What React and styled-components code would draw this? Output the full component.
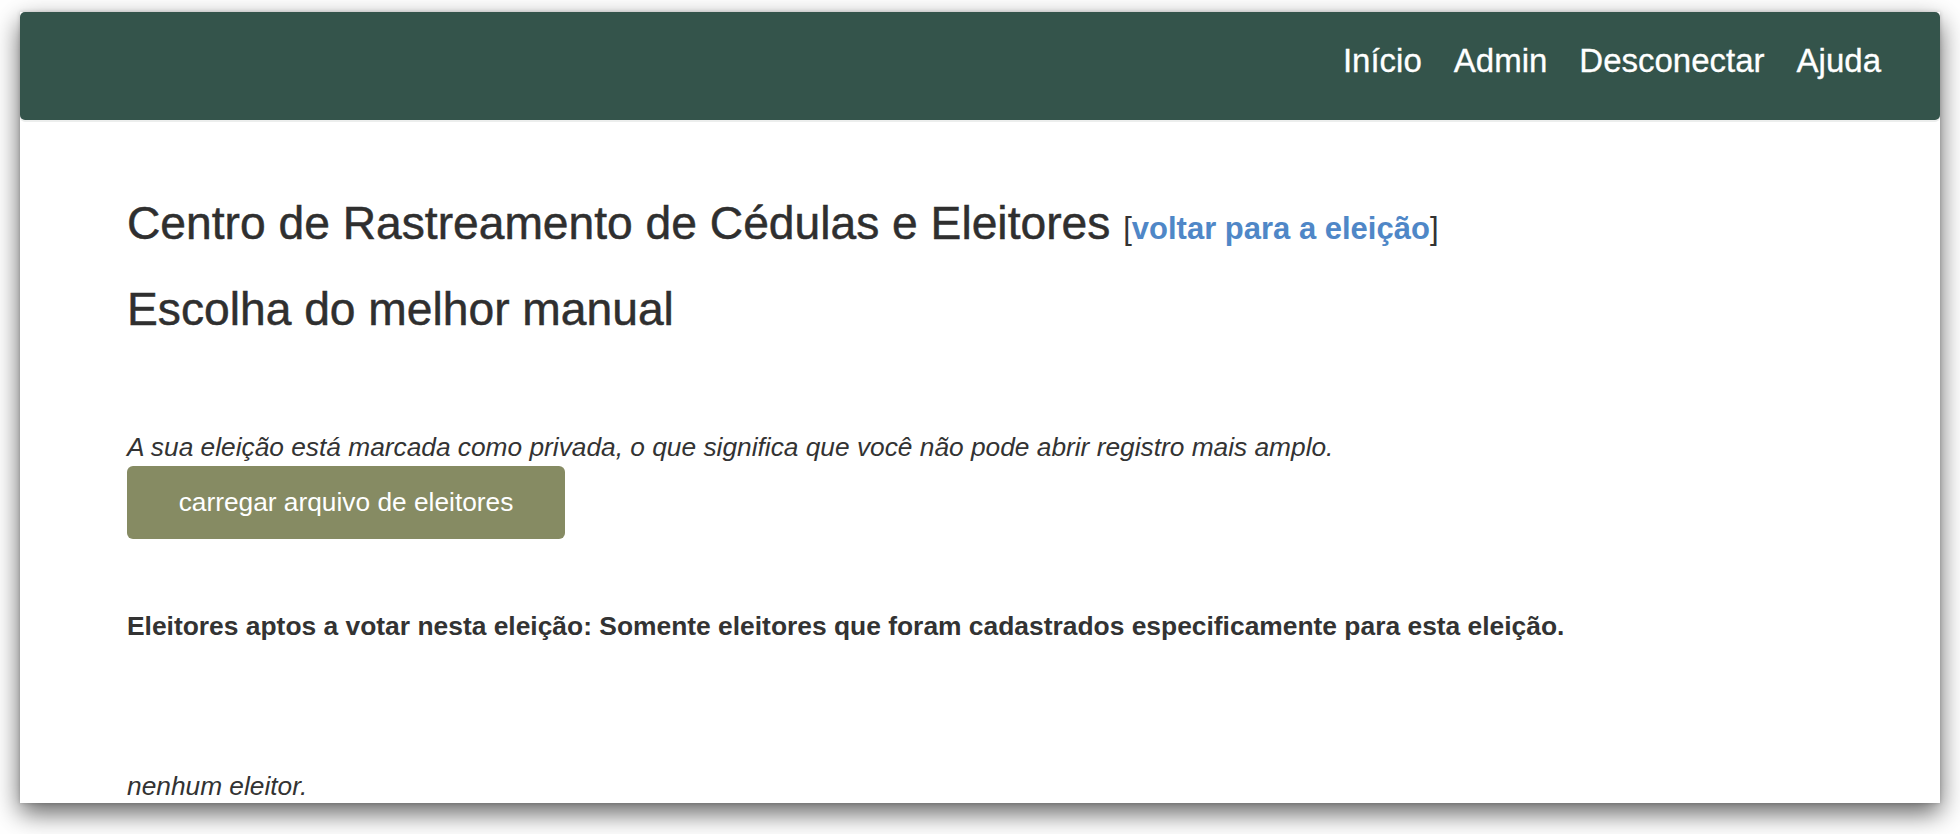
import React from "react";
import styled, { createGlobalStyle } from "styled-components";

const Global = createGlobalStyle`
  html, body {
    margin: 0;
    padding: 0;
    background: #ffffff;
  }
  body {
    font-family: "Liberation Sans", Arial, Helvetica, sans-serif;
    color: #333333;
    overflow: hidden;
  }
`;

const Frame = styled.div`
  width: 1960px;
  height: 834px;
  padding: 12px 0 0 20px;
  box-sizing: border-box;
  overflow: hidden;
`;

const Window = styled.div`
  width: 1920px;
  height: 791px;
  background: #ffffff;
  overflow: hidden;
  box-shadow: 0 10px 24px rgba(0, 0, 0, 0.62), 0 0 4px rgba(0, 0, 0, 0.18);
`;

const Navbar = styled.nav`
  height: 108px;
  background: #34544b;
  border-radius: 5px;
  display: flex;
  justify-content: flex-end;
  align-items: flex-start;
  padding-right: 43px;
  box-shadow: 0 2px 0 #eceeed;
`;

const NavLink = styled.a`
  display: block;
  padding: 32px 16px 0;
  font-size: 33px;
  line-height: 33px;
  color: #ffffff;
  text-decoration: none;
  -webkit-text-stroke: 0.3px #ffffff;
  cursor: pointer;
`;

const Content = styled.main`
  padding: 0 0 0 107px;
`;

const Heading = styled.h2`
  margin: ${(p) => p.$top}px 0 0;
  font-size: 46.2px;
  line-height: 50px;
  font-weight: normal;
  color: #2f2f2f;
  -webkit-text-stroke: 0.5px #2f2f2f;
`;

const Aside = styled.small`
  font-size: 31px;
  color: #333333;
  font-weight: normal;
  -webkit-text-stroke: 0;
`;

const BackLink = styled.a`
  color: #4f87c7;
  font-weight: bold;
  text-decoration: none;
  cursor: pointer;
`;

const Para = styled.p`
  margin: ${(p) => p.$top}px 0 0;
  font-size: ${(p) => (p.$bold ? "26.4px" : "26.3px")};
  line-height: 37px;
  font-style: ${(p) => (p.$italic ? "italic" : "normal")};
  font-weight: ${(p) => (p.$bold ? "bold" : "normal")};
  color: #333333;
`;

const UploadButton = styled.button`
  display: flex;
  align-items: center;
  justify-content: center;
  margin-top: 0;
  width: 438px;
  height: 73px;
  border: none;
  border-radius: 6px;
  background: #868b63;
  color: #ffffff;
  font-family: "Liberation Sans", Arial, Helvetica, sans-serif;
  font-size: 26.3px;
  padding: 0;
  cursor: pointer;
`;

const navItems = ["Início", "Admin", "Desconectar", "Ajuda"];

export default function App() {
  return (
    <>
      <Global />
      <Frame>
        <Window>
          <Navbar>
            {navItems.map((n) => (
              <NavLink key={n}>{n}</NavLink>
            ))}
          </Navbar>
          <Content>
            <Heading $top={78}>
              Centro de Rastreamento de Cédulas e Eleitores{" "}
              <Aside>
                [<BackLink>voltar para a eleição</BackLink>]
              </Aside>
            </Heading>
            <Heading $top={30}>Escolha do melhor manual</Heading>
            <Para $top={95} $italic>
              A sua eleição está marcada como privada, o que significa que você
              não pode abrir registro mais amplo.
            </Para>
            <UploadButton>carregar arquivo de eleitores</UploadButton>
            <Para $top={69} $bold>
              Eleitores aptos a votar nesta eleição: Somente eleitores que foram
              cadastrados especificamente para esta eleição.
            </Para>
            <Para $top={123} $italic>
              nenhum eleitor.
            </Para>
          </Content>
        </Window>
      </Frame>
    </>
  );
}
